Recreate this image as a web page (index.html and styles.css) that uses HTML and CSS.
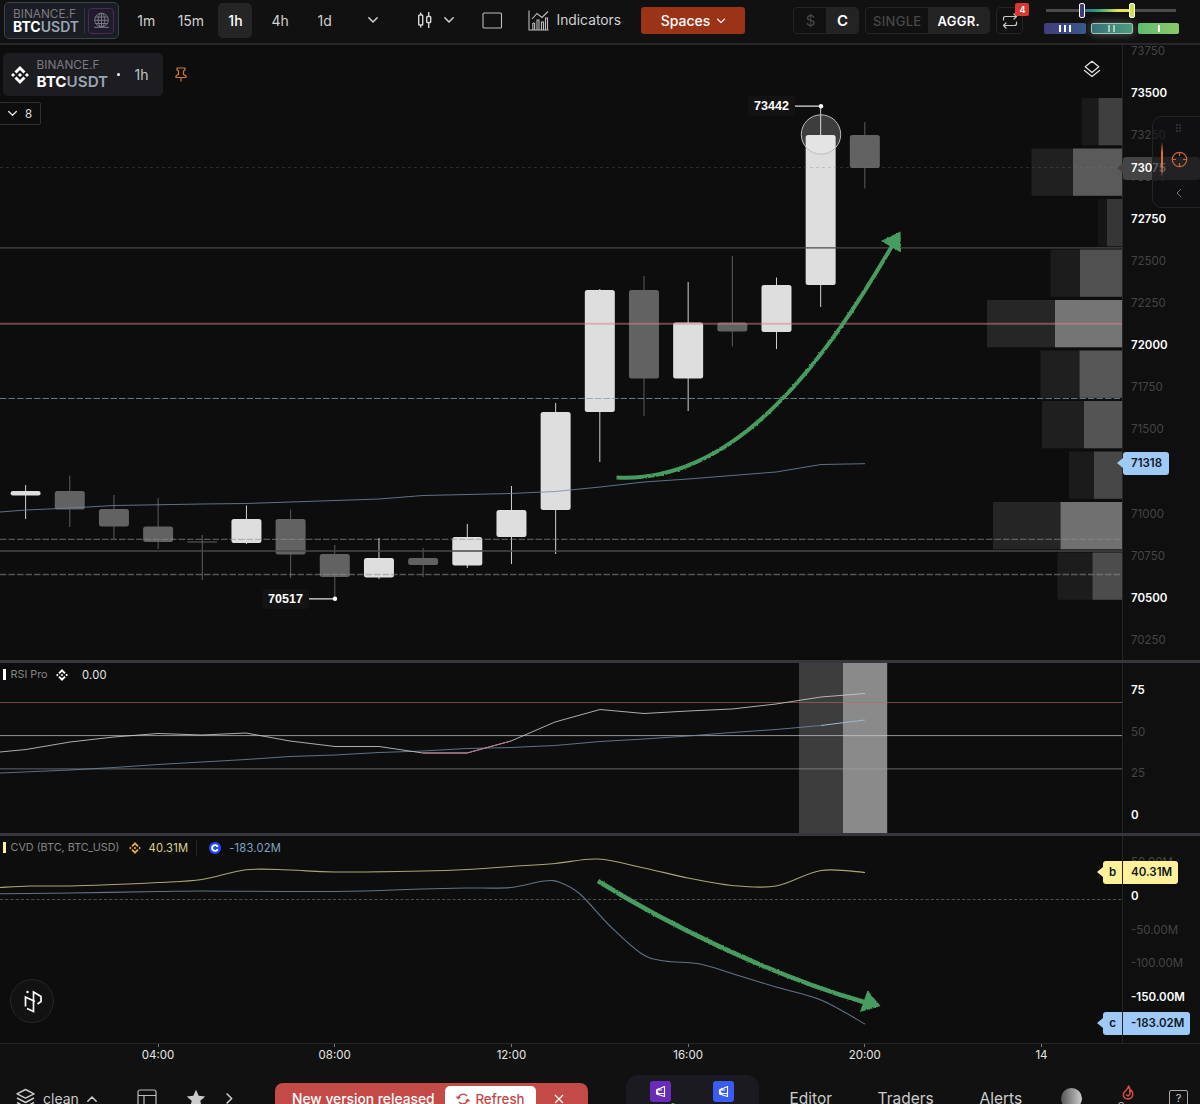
FILE: index.html
```
<!DOCTYPE html>
<html lang="en">
<head>
    <meta charset="UTF-8">
    <meta name="viewport" content="width=device-width, initial-scale=1.0">
    <title>BTCUSDT 1h</title>
    <link rel="stylesheet" href="styles.css">
</head>
<body>
    <!-- shared icons -->
    <svg class="defs" width="0" height="0">
        <symbol id="binance" viewBox="0 0 24 24">
            <path fill="currentColor" d="M16.624 13.92l2.718 2.716-7.353 7.353-7.353-7.352 2.717-2.717 4.636 4.66 4.635-4.66zm4.637-4.636L24 12l-2.715 2.716L18.568 12l2.693-2.716zm-9.272 0l2.716 2.692-2.717 2.718L9.272 12l2.717-2.716zm-9.273 0L5.41 12l-2.692 2.692L0 12l2.716-2.716zM11.99.012l7.353 7.329-2.718 2.715-4.635-4.636-4.636 4.66-2.717-2.716L11.989.012z"/>
        </symbol>
        <symbol id="chevron" viewBox="0 0 12 12">
            <path d="M1.8 3.8 6 8l4.2-4.2" fill="none" stroke="currentColor" stroke-width="1.5" stroke-linecap="round" stroke-linejoin="round"/>
        </symbol>
        <symbol id="token" viewBox="0 0 21 21">
            <path d="M14.500 5.500v10L6.500 13V9zM6.500 9h5.500M6.500 12.500h7.500M9 7.500l-2.500 1.500 2 3.500" fill="none" stroke="#fff" stroke-width="1.100" stroke-linejoin="round"/>
        </symbol>
    </svg>

    <header class="topbar">
        <div class="symbol-box">
            <div class="pair">
                <span class="exchange">BINANCE.F</span>
                <span class="ticker"><b>BTC</b>USDT</span>
            </div>
            <div class="globe">
                <svg width="17" height="17" viewBox="0 0 17 17" fill="none" stroke="#777781">
                    <circle cx="8.500" cy="8" r="6.800"/>
                    <ellipse cx="8.500" cy="8" rx="3.300" ry="6.800"/>
                    <path d="M8.500 1.200v13.600M2 5h13M1.700 8.300h13.600M2.300 11.500h12.400M1 15.300h15"/>
                </svg>
            </div>
        </div>
        <nav class="timeframes">
            <span>1m</span>
            <span>15m</span>
            <span class="active">1h</span>
            <span>4h</span>
            <span>1d</span>
        </nav>
        <svg class="tf-more" width="12" height="12"><use href="#chevron"/></svg>
        <svg class="candle-icon" width="16" height="18" viewBox="0 0 16 18" fill="none" stroke="#d8d8d8" stroke-width="1.400">
            <rect x="1.700" y="4" width="4" height="10" rx=".8"/>
            <path d="M3.700 1.500V4M3.700 14v2.500M11.700 1v4.500M11.700 11.500V17"/>
            <rect x="9.700" y="5.500" width="4" height="6" rx=".8"/>
        </svg>
        <svg class="candle-more" width="12" height="12"><use href="#chevron"/></svg>
        <svg class="frame-icon" width="21" height="17" viewBox="0 0 21 17"><rect x="1" y="1" width="18.500" height="15" rx="1" fill="none" stroke="#bdbdbd" stroke-width="1.100"/></svg>
        <svg class="indicators-icon" width="21" height="21" viewBox="0 0 21 21" fill="none" stroke="#bdbdbd" stroke-width="1.100">
            <path d="M1 .5v19.500h19.500M4.800 20v-7M6.600 20v-7M4.800 13h1.800M9 20v-10h2v10M13.500 20v-8h2v8M17.500 20V8h2v12M4 9l5-5.500 5 4L20 1.500"/>
        </svg>
        <span class="indicators">Indicators</span>
        <button class="spaces">Spaces <svg width="10" height="10"><use href="#chevron"/></svg></button>
        <div class="toggle currency"><span>$</span><span class="on">C</span></div>
        <div class="toggle mode"><span>SINGLE</span><span class="on">AGGR.</span></div>
        <div class="loop">
            <svg width="16" height="16" viewBox="0 0 16 16" fill="none" stroke="#c8c8c8" stroke-width="1.200" stroke-linecap="round" stroke-linejoin="round">
                <path d="M1.500 7V5.500q0-2 2-2h11M12 1l2.500 2.500L12 6M14.500 9v1.500q0 2-2 2h-11M4 10l-2.500 2.500L4 15"/>
            </svg>
            <span class="count">4</span>
        </div>
        <div class="heat">
            <div class="slider"><i></i><i></i></div>
            <div class="levels">
                <span><i></i><i></i><i></i></span>
                <span class="current"><i></i><i></i></span>
                <span><i></i></span>
            </div>
        </div>
    </header>

    <main>
        <section class="pane price-pane">
            <svg class="chart" width="1122" height="615" viewBox="0 45 1122 615">
                <defs>
                    <filter id="chalk" x="-5%" y="-5%" width="110%" height="110%">
                        <feTurbulence type="fractalNoise" baseFrequency=".45" numOctaves="2" seed="3"/>
                        <feDisplacementMap in="SourceGraphic" scale="2.200" xChannelSelector="R" yChannelSelector="G"/>
                    </filter>
                </defs>
                <g id="profile"></g>
                <g id="candles"></g>
                <g class="levels-lines">
                    <path d="M0 167.500H1122" stroke="#777" stroke-opacity=".28" stroke-dasharray="3 3"/>
                    <path d="M0 247.800H1122" stroke="#484848" stroke-width="1.300"/>
                    <path d="M0 323.700H1122" stroke="#d8808c" stroke-opacity=".5" stroke-width="2"/>
                    <path d="M0 398.500H1122" stroke="#8097b5" stroke-opacity=".75" stroke-width="1.200" stroke-dasharray="6.500 2"/>
                    <path d="M0 539.300H1122" stroke="#8f8f8f" stroke-opacity=".55" stroke-width="1.300" stroke-dasharray="6.500 2"/>
                    <path d="M0 551H1122" stroke="#484848" stroke-width="1.300"/>
                    <path d="M0 574.500H1122" stroke="#8f8f8f" stroke-opacity=".55" stroke-width="1.300" stroke-dasharray="6.500 2"/>
                </g>
                <polyline class="ma" points="0,512 26,510 70,508 114,505.500 202,504 246,503.500 335,500.500 379,499 423,495.500 511,493.500 555,491.500 600,487 644,482 688,479 732,475.500 776,472 821,464.500 865,463.700"/>
                <circle cx="821" cy="134.500" r="19.700" fill="#fff" fill-opacity=".2" stroke="#bbb"/>
                <path d="M795 106.200h26M309 598.800h26" stroke="#ddd" stroke-width="1.300"/>
                <circle cx="821" cy="106.200" r="2.200" fill="#fff"/>
                <circle cx="335" cy="598.800" r="2.200" fill="#fff"/>
                <g filter="url(#chalk)">
                    <path d="M616.500 477.500C740 484 830 352 892 246" fill="none" stroke="#469c5f" stroke-width="4"/>
                    <path d="M900.500 231.500 901 252.500 881 241z" fill="#469c5f"/>
                </g>
            </svg>
            <ul class="axis">
                <li>73750</li><li class="major">73500</li><li>73250</li><li>73000</li><li class="major">72750</li>
                <li>72500</li><li>72250</li><li class="major">72000</li><li>71750</li><li>71500</li><li></li>
                <li>71000</li><li>70750</li><li class="major">70500</li><li>70250</li>
            </ul>
            <span class="extreme high">73442</span>
            <span class="extreme low">70517</span>
            <div class="chart-title">
                <div class="legend">
                    <svg width="18" height="18"><use href="#binance"/></svg>
                    <div class="pair">
                        <span class="exchange">BINANCE.F</span>
                        <span class="ticker"><b>BTC</b>USDT</span>
                    </div>
                    <i class="dot"></i>
                    <span class="interval">1h</span>
                </div>
                <svg class="pin" width="12" height="15" viewBox="0 0 12 15" fill="none" stroke="#d87a30" stroke-width="1.200" stroke-linejoin="round"><path d="M2 1h8v2L8.500 4v3.500L11 9v1.500H1V9l2.500-1.500V4L2 3zM6 10.500V14.500"/></svg>
            </div>
            <div class="collapse"><svg width="11" height="11"><use href="#chevron"/></svg>8</div>
            <svg class="layers-btn" width="18" height="18" viewBox="0 0 18 18" fill="none" stroke="#ddd" stroke-width="1.300" stroke-linejoin="round" stroke-linecap="round"><path d="M9 1.300 15.800 6.800 9 12.500 2.200 6.800zM1.500 10.500 9 16.500l7.500-6"/></svg>
            <div class="tag last"><span>73075</span></div>
            <div class="tag avg"><span>71318</span></div>
            <div class="dock">
                <svg width="6" height="9" viewBox="0 0 6 9" fill="#888"><path d="M.5.500h1v1h-1zM3.500.500h1v1h-1zM.5 3.500h1v1h-1zM3.500 3.500h1v1h-1zM.5 6.500h1v1h-1zM3.500 6.500h1v1h-1z"/></svg>
                <svg width="17" height="17" viewBox="0 0 17 17" fill="none" stroke="#c5683a" stroke-width="1.200"><circle cx="8.500" cy="8.500" r="7.200"/><path d="M8.500 1v4M8.500 12v4M1 8.500h4M12 8.500h4"/></svg>
                <svg width="6" height="10" viewBox="0 0 6 10" fill="none" stroke="#777"><path d="M5 1 1 5l4 4"/></svg>
            </div>
        </section>

        <section class="pane rsi-pane">
            <svg class="chart" width="1122" height="170" viewBox="0 663 1122 170">
                <path d="M799 663h44v170h-44z" fill="#3d3d3d"/>
                <path d="M843 663h44.200v170H843z" fill="#8a8a8a"/>
                <path d="M0 702.500H1122" stroke="#b56a60" stroke-opacity=".6"/>
                <path d="M0 735.600H1122" stroke="#cfcfcf" stroke-opacity=".7"/>
                <path d="M0 768.900H1122" stroke="#a5a5a5" stroke-opacity=".6"/>
                <polyline class="ma" points="0,773 70,770 114,767.500 158,764.500 202,762 246,759.500 290,756.500 335,755 379,752.500 423,751 467,748.500 511,747.500 555,745.500 600,741.500 644,739 688,736 732,732.500 776,729.500 821,725.500"/>
                <path d="M821 725.500 865 720" stroke="#9fb8d2"/>
                <polyline class="rsi" points="0,752 26,749.500 70,742 114,737 158,733.500 202,735 246,733 290,741 335,746.500 379,746.500 423,753 467,753 511,741 555,722 600,709.500 644,713.500 688,711 732,709 776,704 821,697 865,693.500"/>
                <polyline points="423,753 467,753 511,741" fill="none" stroke="#b9758c"/>
            </svg>
            <ul class="axis">
                <li class="major">75</li><li>50</li><li>25</li><li class="major">0</li>
            </ul>
            <div class="pane-title">
                <i class="mark"></i>RSI Pro
                <svg class="white" width="12" height="12"><use href="#binance"/></svg>
                <span class="value">0.00</span>
            </div>
        </section>

        <section class="pane cvd-pane">
            <svg class="chart" width="1122" height="207" viewBox="0 836 1122 207">
                <path d="M0 899.500H1122" stroke="#4e4e4e" stroke-dasharray="3.200 2"/>
                <path id="cvd-futures" fill="none" stroke="#aaa678" stroke-width="1.100"/>
                <path id="cvd-spot" fill="none" stroke="#5f7489" stroke-width="1.100"/>
                <g filter="url(#chalk)">
                    <path d="M598 881C665 923 770 975 864 1002" fill="none" stroke="#469c5f" stroke-width="4.500"/>
                    <path d="M867.500 990.500 880.500 1006 860 1012z" fill="#469c5f"/>
                </g>
            </svg>
            <ul class="axis">
                <li>50.00M</li><li class="major">0</li><li>-50.00M</li><li>-100.00M</li><li class="major">-150.00M</li>
            </ul>
            <div class="pane-title">
                <i class="mark yellow"></i>CVD (BTC, BTC_USD)
                <svg class="gold" width="12" height="12"><use href="#binance"/></svg>
                <span class="value futures">40.31M</span>
                <i class="sep"></i>
                <svg class="coinbase" width="12" height="12" viewBox="0 0 12 12"><circle cx="6" cy="6" r="6" fill="#1f4bff"/><path d="M8.700 4.900a2.900 2.900 0 1 0 0 2.200" fill="none" stroke="#fff" stroke-width="1.900"/></svg>
                <span class="value spot">-183.02M</span>
            </div>
            <div class="tag cvd-b"><em>b</em><span>40.31M</span></div>
            <div class="tag cvd-c"><em>c</em><span>-183.02M</span></div>
            <div class="logo">
                <svg width="20" height="24" viewBox="0 0 20 24" fill="none" stroke="#fff" stroke-width="1.700"><path d="M2.500 17.500V8l9.500 4.500M4 19.500l6.500 3V3l7.500 4.500v5L14.500 15"/><circle cx="4.500" cy="3" r="1.200" fill="#fff" stroke="none"/></svg>
            </div>
        </section>
    </main>

    <div class="time-axis">
        <span>04:00</span><span>08:00</span><span>12:00</span><span>16:00</span><span>20:00</span><span>14</span>
    </div>

    <footer class="bottombar">
        <svg class="stack" width="21" height="21" viewBox="0 0 21 21" fill="none" stroke="#ccc" stroke-width="1.500" stroke-linejoin="round"><path d="M10.500 1.500 19 5.800l-8.500 4.300L2 5.800zM2 10l8.500 4.500L19 10M2 14.500l8.500 4.500 8.500-4.500"/></svg>
        <span class="workspace">clean</span>
        <svg class="up" width="12" height="12"><use href="#chevron"/></svg>
        <svg class="layout" width="20" height="20" viewBox="0 0 20 20" fill="none" stroke="#bbb" stroke-width="1.200"><rect x="1" y="1" width="18" height="18" rx="2"/><path d="M1 6.500h18M7 6.500V19"/></svg>
        <svg class="star" width="20" height="20" viewBox="0 0 20 20"><path d="M10 .8l2.700 6 6.500.7-4.900 4.300 1.400 6.500L10 15l-5.700 3.300 1.400-6.500L.8 7.500l6.500-.7z" fill="#ccc"/></svg>
        <svg class="next" width="13" height="13"><use href="#chevron"/></svg>
        <div class="banner">
            <span>New version released</span>
            <button><svg width="14" height="14" viewBox="0 0 14 14" fill="none" stroke="#c24845" stroke-width="1.300"><path d="M2.300 6A5 5 0 0 1 11 4M11.700 8A5 5 0 0 1 3 10M.5 4.500 2.300 6.500l2-1.500M13.500 9.500l-1.800-2-2 1.500"/></svg>Refresh</button>
            <svg class="close" width="10" height="10" viewBox="0 0 10 10"><path d="M1 1l8 8M9 1 1 9" stroke="#fff" stroke-width="1.200"/></svg>
        </div>
        <div class="dock-apps">
            <i class="app purple"><svg width="21" height="21"><use href="#token"/></svg></i>
            <i class="app blue"><svg width="21" height="21"><use href="#token"/></svg></i>
        </div>
        <span class="link editor">Editor</span>
        <span class="link traders">Traders</span>
        <span class="link alerts">Alerts</span>
        <i class="moon"></i>
        <div class="fire">
            <svg width="12" height="15" viewBox="0 0 12 15" fill="none" stroke="#e0513c" stroke-width="1.400" stroke-linejoin="round"><path d="M6.500 1c.5 3-4 4.500-5 7.500C.7 11.500 3 14 6 14s5-2.500 4.800-5C10.700 7 9.800 5.500 9 5c0 1.500-.6 2.300-1.300 2.500C8.200 4.800 8 2.500 6.500 1zM4 9.500l2 1.500 2.500-2.500"/></svg>
            <span>Guru</span>
        </div>
        <div class="help">?</div>
    </footer>
    <script src="script.js"></script>
</body>
</html>
```

FILE: styles.css
```
* {
    box-sizing: border-box;
}
body {
    margin: 0;
    width: 1200px;
    height: 1104px;
    overflow: hidden;
    background-color: #0d0d0d;
    color: #d0d0d0;
    font-family: Inter, "Liberation Sans", sans-serif;
    font-size: 14px;
}
svg {
    display: block;
    flex: none;
}
ul {
    list-style: none;
    margin: 0;
    padding: 0;
}
button {
    border: 0;
    padding: 0;
    font: inherit;
}
.defs {
    position: absolute;
}

/* top bar */
.topbar {
    display: flex;
    align-items: flex-start;
    height: 45px;
    background-color: #111;
    border-bottom: 2px solid #26262b;
}
.topbar > * {
    flex: none;
}
.symbol-box {
    display: flex;
    align-items: center;
    width: 115px;
    height: 37px;
    margin: 2px 0 0 4px;
    padding-left: 8px;
    border: 1px solid #3a4150;
    border-radius: 5px;
    background-color: #1a1d24;
}
.pair {
    display: flex;
    flex-direction: column;
    width: 72px;
}
.exchange {
    font-size: 11.800px;
    line-height: 12px;
    color: #7b7b80;
}
.ticker {
    font-size: 14px;
    line-height: 13px;
    font-weight: 600;
    color: #9aa5b3;
}
.ticker b {
    font-weight: 700;
    color: #fff;
}
.symbol-box .pair {
    padding-bottom: 1px;
    border-right: 1px solid #2d3340;
}
.globe {
    display: flex;
    align-items: center;
    justify-content: center;
    width: 26px;
    height: 26px;
    margin-left: 3px;
    border: 1px solid #4a2a58;
    border-radius: 4px;
    background-color: #211a2c;
}
.timeframes {
    display: flex;
    margin: 3px 0 0 5px;
}
.timeframes span {
    width: 34px;
    margin: 0 5.3px;
    line-height: 35px;
    text-align: center;
    border-radius: 5px;
}
.timeframes .active {
    background-color: #252525;
    color: #fff;
    font-weight: 500;
}
.tf-more {
    margin: 14px 0 0 20px;
}
.candle-icon {
    margin: 11px 0 0 38px;
}
.candle-more {
    margin: 14px 0 0 10px;
}
.frame-icon {
    margin: 12px 0 0 27px;
}
.indicators-icon {
    margin: 10px 0 0 25px;
}
.indicators {
    width: 66px;
    margin: 7px 0 0 7.500px;
    font-size: 13.800px;
    line-height: 27px;
    white-space: nowrap;
}
.spaces {
    display: flex;
    align-items: center;
    justify-content: center;
    gap: 6px;
    width: 104px;
    height: 27px;
    margin: 7px 0 0 19px;
    border-radius: 3px;
    background-color: #9b3417;
    color: #fff;
    font-weight: 500;
}
.toggle {
    display: flex;
    height: 27px;
    margin-top: 7px;
    border: 1px solid #242424;
    border-radius: 4px;
    overflow: hidden;
    line-height: 26px;
    text-align: center;
    color: #484848;
}
.toggle span {
    flex: 1;
}
.toggle .on {
    background-color: #232323;
    color: #fff;
    font-weight: 600;
}
.currency {
    width: 66px;
    margin-left: 48px;
    font-size: 15px;
}
.mode {
    width: 125px;
    margin-left: 6px;
    font-size: 13px;
    font-weight: 500;
    letter-spacing: .3px;
}
.loop {
    position: relative;
    display: flex;
    align-items: center;
    justify-content: center;
    width: 27px;
    height: 27px;
    margin: 7px 0 0 6px;
    border: 1px solid #242424;
    border-radius: 4px;
}
.count {
    position: absolute;
    left: 18px;
    top: -5px;
    width: 14px;
    height: 13px;
    border-radius: 2px;
    background-color: #d93831;
    color: #fff;
    font-size: 9px;
    font-weight: 600;
    line-height: 13px;
    text-align: center;
}
.heat {
    width: 135px;
    margin-left: 21px;
}
.slider {
    display: flex;
    align-items: center;
    gap: 44px;
    height: 15px;
    margin-top: 3px;
    padding-left: 35px;
    background: linear-gradient(90deg, #22708a, #3aa780 35%, #e8e24c 75%) 40px 6px / 45px 3px no-repeat,
                linear-gradient(#4b4b4b, #4b4b4b) 2px 6px / 130px 3px no-repeat;
}
.slider i {
    width: 6px;
    height: 15px;
    border: 1.5px solid #fff;
    border-radius: 2px;
    background-color: #3e3a72;
}
.slider i + i {
    background-color: #cde04b;
}
.levels {
    display: flex;
    gap: 5px;
    margin-top: 5px;
}
.levels span {
    display: flex;
    align-items: center;
    justify-content: center;
    gap: 3px;
    width: 41.700px;
    height: 11px;
    border-radius: 2px;
    background: linear-gradient(90deg, #423d7c, #38588a);
}
.levels span:last-child {
    background: linear-gradient(90deg, #60bb72, #8bc867);
}
.levels .current {
    border: 1px solid #9cc4b8;
    background: linear-gradient(90deg, #38707a, #4c9d7e);
    box-shadow: 0 0 8px rgba(255,255,255,.3);
}
.levels i {
    width: 2px;
    height: 7px;
    background-color: #fff;
}
.levels .current i {
    background-color: #a9cdbb;
}

/* panes */
.pane {
    position: relative;
    display: flex;
    overflow: hidden;
}
.price-pane {
    height: 615px;
}
.rsi-pane {
    height: 173px;
    border-top: 3px solid #36363d;
}
.cvd-pane {
    height: 210px;
    border-top: 3px solid #36363d;
}
.ma {
    fill: none;
    stroke: #6f8ba8;
    stroke-opacity: .8;
}
.rsi {
    fill: none;
    stroke: #c9c9c9;
    stroke-opacity: .85;
}
.axis {
    width: 78px;
    padding-left: 8px;
    border-left: 1px solid #252525;
    background-color: #0f0f0f;
    font-size: 11.5px;
    color: #454545;
}
.axis li {
    height: 42.100px;
    line-height: 42.100px;
}
.axis .major {
    color: #fff;
    font-weight: 600;
}
.price-pane .axis li:first-child {
    margin-top: -15.500px;
}
.rsi-pane .axis {
    padding-top: 7px;
}
.rsi-pane .axis li {
    height: 41.700px;
    line-height: 41.700px;
}
.cvd-pane .axis {
    padding-top: 10px;
}
.cvd-pane .axis li {
    height: 33.800px;
    line-height: 33.800px;
}
.extreme {
    position: absolute;
    width: 47px;
    height: 20px;
    border-radius: 3px;
    background-color: #131313;
    color: #fff;
    font: bold 12.500px/20px "Liberation Sans", sans-serif;
    text-align: center;
}
.high {
    left: 748px;
    top: 51px;
}
.low {
    left: 262px;
    top: 544px;
}
.chart-title {
    position: absolute;
    left: 3px;
    top: 8px;
    display: flex;
    align-items: center;
}
.legend {
    display: flex;
    align-items: center;
    width: 160px;
    height: 43px;
    padding-left: 8px;
    border-radius: 5px;
    background-color: #1d1c21;
    color: #fff;
}
.legend .pair {
    width: 72px;
    padding-bottom: 2px;
    margin-left: 7.500px;
}
.legend .exchange {
    font-size: 11.800px;
    line-height: 15px;
}
.legend .ticker {
    font-size: 15.200px;
    line-height: 17px;
}
.dot {
    width: 3px;
    height: 3px;
    margin-left: 8px;
    border-radius: 50%;
    background-color: #fff;
}
.interval {
    margin-left: 15px;
    color: #c4c4c8;
}
.pin {
    margin-left: 12px;
}
.collapse {
    position: absolute;
    left: -1px;
    top: 57px;
    display: flex;
    align-items: center;
    gap: 7px;
    width: 42px;
    height: 23px;
    padding-left: 7px;
    border: 1px solid #303030;
    border-radius: 2px;
    color: #e0e0e0;
    font-size: 11.500px;
}
.layers-btn {
    position: absolute;
    left: 1083px;
    top: 15px;
}
.tag {
    position: absolute;
    left: 1123px;
    display: flex;
    height: 23px;
    border-radius: 3px;
    background-color: #9fcaf8;
    color: #101820;
    font-size: 11.500px;
    font-weight: 600;
    line-height: 23px;
}
.tag span {
    flex: 1;
    padding-left: 8px;
}
.tag em {
    width: 20px;
    border-right: 1px solid #222;
    font-style: normal;
    text-align: center;
}
.tag::before {
    content: "";
    position: absolute;
    left: -6px;
    top: 6px;
    border: 5.500px solid transparent;
    border-left: 0;
    border-right: 6px solid #9fcaf8;
}
.last {
    top: 112px;
    width: 77px;
    background-color: #444;
    color: #fff;
}
.last::before {
    border-right-color: #444;
}
.avg {
    top: 407px;
    width: 46px;
}
.cvd-b {
    left: 1103px;
    top: 25px;
    width: 75px;
    background-color: #fff09a;
}
.cvd-b::before {
    border-right-color: #fff09a;
}
.cvd-c {
    left: 1103px;
    top: 176px;
    width: 87px;
}
.dock {
    position: absolute;
    left: 1152px;
    top: 71px;
    display: flex;
    flex-direction: column;
    align-items: center;
    gap: 24px;
    width: 56px;
    height: 92px;
    padding: 7px 2px 0 0;
    border: 1px solid #252527;
    border-radius: 10px;
    background: linear-gradient(transparent, #d87040 30%, #d87040 70%, transparent) 8px 25px / 2px 35px no-repeat,
                rgba(17,17,20,.68);
}
.dock svg + svg {
    margin-top: -6px;
}
.dock svg:last-child {
    margin-top: -4px;
}
.pane-title {
    position: absolute;
    left: 3px;
    top: 4px;
    display: flex;
    align-items: center;
    height: 15px;
    font-size: 10.800px;
    white-space: nowrap;
    color: #858585;
}
.mark {
    width: 3px;
    height: 11px;
    margin-right: 4.500px;
    background-color: #fff;
}
.yellow {
    background-color: #fff09a;
}
.white {
    margin: 0 14px 0 8.500px;
    color: #fff;
}
.gold {
    margin: 0 8px 0 9px;
    color: #e2a83c;
}
.value {
    color: #e8e8e8;
    font-size: 11.200px;
    letter-spacing: .2px;
}
.futures {
    color: #d9d38d;
}
.spot {
    margin-left: 8px;
    color: #7fa5c7;
}
.sep {
    width: 1px;
    height: 16px;
    margin: 0 12px 0 8px;
    background-color: #242424;
}
.logo {
    position: absolute;
    left: 10px;
    top: 143px;
    display: flex;
    align-items: center;
    justify-content: center;
    width: 44px;
    height: 44px;
    padding-left: 2px;
    border: 1px solid #272727;
    border-radius: 50%;
    background-color: #121212;
}

/* time axis */
.time-axis {
    display: flex;
    height: 27px;
    padding-left: 69.700px;
    border-top: 1px solid #252525;
    background-color: #111;
    font-size: 11.500px;
    color: #e6e6e6;
}
.time-axis span {
    width: 176.700px;
    line-height: 22px;
    text-align: center;
    background: linear-gradient(#777, #777) center top / 1px 3px no-repeat;
}

/* bottom bar */
.bottombar {
    display: flex;
    align-items: center;
    height: 57px;
    background-color: #111;
    font-size: 15.500px;
    color: #ccc;
}
.bottombar > * {
    flex: none;
}
.stack {
    margin-left: 15px;
}
.workspace {
    width: 38px;
    margin-left: 7px;
    font-size: 14px;
}
.up {
    margin-left: 5px;
    transform: rotate(180deg);
}
.layout {
    margin-left: 39px;
}
.star {
    margin-left: 29px;
}
.next {
    margin-left: 17px;
    transform: rotate(-90deg);
}
.banner {
    display: flex;
    align-items: center;
    width: 313px;
    height: 32px;
    margin-left: 39px;
    padding-left: 17px;
    border-radius: 8px;
    background-color: #c34a47;
    color: #fff;
    font-size: 13.800px;
    font-weight: 500;
}
.banner span {
    width: 153px;
    white-space: nowrap;
}
.banner button {
    display: flex;
    align-items: center;
    justify-content: center;
    gap: 5px;
    width: 91px;
    height: 25px;
    border-radius: 5px;
    background-color: #fff;
    color: #c24845;
    font-size: 13.300px;
}
.close {
    margin-left: 18px;
}
.dock-apps {
    display: flex;
    gap: 42px;
    width: 133px;
    height: 48px;
    margin-left: 38px;
    padding: 6px 0 0 24px;
    border-radius: 12px;
    background-color: #1b1a20;
}
.app {
    position: relative;
    width: 21px;
    height: 21px;
    border-radius: 3px;
}
.purple {
    background-color: #6a2bb8;
}
.purple::after {
    content: "";
    position: absolute;
    left: 21px;
    top: 22px;
    width: 4px;
    height: 4px;
    border-radius: 50%;
    background-color: #55b840;
}
.blue {
    background-color: #3a5cf0;
}
.editor {
    width: 46px;
    margin-left: 30.500px;
}
.traders {
    width: 60px;
    margin-left: 42px;
}
.alerts {
    width: 46px;
    margin-left: 42px;
}
.moon {
    width: 21px;
    height: 21px;
    margin-left: 35px;
    border-radius: 50%;
    background: linear-gradient(90deg, #555, #ccc);
}
.fire {
    display: flex;
    flex-direction: column;
    align-items: center;
    width: 30px;
    height: 28px;
    margin-left: 31.500px;
    font-size: 9px;
}
.help {
    width: 19px;
    height: 18px;
    margin-left: 26px;
    border: 1px solid #aaa;
    border-radius: 2px;
    font-size: 11px;
    line-height: 15px;
    text-align: center;
}
```

FILE: script.js
```
// [body top, body bottom, wick top, wick bottom, up]
const candles = [
    [491, 495.5, 485, 519, 1], [491, 509.5, 475.5, 527, 0], [509, 526.5, 495, 539, 0],
    [526.5, 542, 498, 549, 0], [541.5, 542.5, 535, 580, 0], [519, 543, 505.5, 544, 1],
    [519, 554.5, 509.5, 578, 0], [554, 577, 545, 599, 0], [558, 577.5, 538, 579, 1],
    [558, 565, 548, 577, 0], [537, 565.5, 524, 568, 1], [510, 537, 486, 564, 1],
    [412, 510, 403, 554, 1], [290, 412, 289, 462, 1], [290, 378.5, 276, 416, 0],
    [322.5, 378.5, 282, 411, 1], [322.5, 331.5, 256, 346.5, 0], [285, 332, 277.5, 349, 1],
    [135, 285, 106, 307, 1], [135, 168, 122, 188.5, 0]
];

// [total start, inner start, inner shade, total shade]
const profile = [
    [1081.5, 1098.5, '#3f3f3f', '#1a1a1a'], [1031.5, 1073, '#5a5a5a', '#202020'],
    [1098, 1107, '#363636', '#161616'], [1050.5, 1080, '#505050', '#1c1c1c'],
    [987, 1055, '#757575', '#262626'], [1040.5, 1079.5, '#575757', '#1f1f1f'],
    [1042, 1084, '#545454', '#1f1f1f'], [1069, 1094, '#474747', '#1b1b1b'],
    [993, 1060.5, '#707070', '#252525'], [1057.5, 1092.5, '#4c4c4c', '#1c1c1c']
];

const futures = [[0, 887.5], [30, 886], [70, 886], [114, 884.5], [158, 882.5], [202, 879.5], [246, 869.8],
    [290, 870], [335, 872], [423, 871], [467, 869.5], [511, 866.5], [555, 863.5], [598, 859], [644, 868],
    [688, 878], [732, 885.5], [776, 886], [821, 870.5], [865, 872.5]];

const spot = [[0, 893.7], [70, 893], [158, 891.5], [202, 891], [335, 891.5], [423, 889], [467, 888],
    [511, 887.5], [544, 881], [560, 882.5], [580, 894], [610, 926], [642, 954], [665, 961], [700, 964],
    [732, 973.5], [776, 987], [821, 1000], [865, 1024]];

function rect(x, y, w, h, fill, r = 0) {
    return `<rect x="${x}" y="${y}" width="${w}" height="${h}" rx="${r}" fill="${fill}"/>`;
}

function smooth(pts) {
    let d = `M${pts[0]}`;
    for (let i = 0; i < pts.length - 1; i++) {
        const a = pts[i - 1] || pts[i], b = pts[i], c = pts[i + 1], e = pts[i + 2] || c;
        d += `C${b[0] + (c[0] - a[0]) / 6} ${b[1] + (c[1] - a[1]) / 6} ${c[0] - (e[0] - b[0]) / 6} ${c[1] - (e[1] - b[1]) / 6} ${c[0]} ${c[1]}`;
    }
    return d;
}

document.getElementById('candles').innerHTML = candles.map(([top, bottom, high, low, up], i) => {
    const x = 25.6 + i * 44.17;
    return rect(x - 0.5, high, 1, low - high, up ? '#d0d0d0' : '#5c5c5c')
        + rect(x - 15, top, 30, bottom - top, up ? '#dedede' : '#626262', Math.min(2.5, (bottom - top) / 2));
}).join('');

document.getElementById('profile').innerHTML = profile.map(([start, inner, light, dark], i) => {
    const y = 98 + i * 50.5;
    return rect(start, y, inner - start, 47.3, dark) + rect(inner, y, 1122 - inner, 47.3, light);
}).join('');

document.getElementById('cvd-futures').setAttribute('d', smooth(futures));
document.getElementById('cvd-spot').setAttribute('d', smooth(spot));
```
